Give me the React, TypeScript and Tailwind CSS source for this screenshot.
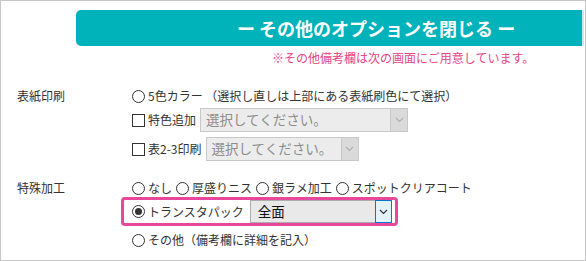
import React from "react";

const Radio = ({ checked = false }: { checked?: boolean }) => (
  <span className="inline-flex w-[13px] h-[13px] shrink-0 rounded-full border border-[#333] bg-white items-center justify-center">
    {checked && <span className="w-[7px] h-[7px] rounded-full bg-[#333]" />}
  </span>
);

const Check = () => (
  <span className="inline-block w-[13px] h-[13px] shrink-0 border border-[#333] bg-white" />
);

const Chevron = ({ color }: { color: string }) => (
  <svg width="9" height="6" viewBox="0 0 9 6" fill="none">
    <path d="M1 1l3.5 3.5L8 1" stroke={color} strokeWidth="1.2" />
  </svg>
);

const DisabledSelect = ({ w }: { w: string }) => (
  <div
    className={`${w} h-[24px] flex items-stretch border border-[#c8c8c8] bg-[#ececec] text-[#8d8d8d] text-[13.5px]`}
  >
    <div className="flex-1 flex items-center pl-[5px] leading-none">選択してください。</div>
    <div className="w-[17px] flex items-center justify-center bg-[#dadada] border-l border-[#c8c8c8]">
      <Chevron color="#b0b0b0" />
    </div>
  </div>
);

export default function App() {
  return (
    <div className="w-[586px] h-[261px] bg-white border border-[#c6c6c6] overflow-hidden font-['Noto_Sans_CJK_JP',sans-serif] text-[12px] text-[#333] leading-none">
      <div className="flex mt-[9px] ml-[75px] h-[36px]">
        <div className="flex-1 rounded-l-[5px] bg-[#00b2b9] text-white font-bold text-[18px] flex items-center pl-[161px] whitespace-nowrap">
          ー その他のオプションを閉じる ー
        </div>
        <div className="w-[2px] bg-[#cde9ef]" />
        <div className="w-[1px]" />
      </div>
      <div className="h-[18px] mt-[3px] pl-[271px] flex items-center text-[#e6457f] text-[12px]">
        ※その他備考欄は次の画面にご用意しています。
      </div>

      <div className="grid grid-cols-[115px_1fr] pl-[16px] mt-[20px]">
        <div className="h-[18px] flex items-center">表紙印刷</div>
        <div className="flex flex-col">
          <div className="h-[18px] flex items-center gap-[3px]">
            <Radio />
            <span>5色カラー （選択し直しは上部にある表紙刷色にて選択）</span>
          </div>
          <div className="h-[24px] mt-[3px] flex items-center">
            <Check />
            <span className="ml-[3px] mr-[4px]">特色追加</span>
            <DisabledSelect w="w-[208px]" />
          </div>
          <div className="h-[24px] mt-[5px] flex items-center">
            <Check />
            <span className="ml-[3px] mr-[4px]">表2-3印刷</span>
            <DisabledSelect w="w-[153px]" />
          </div>
        </div>
      </div>

      <div className="grid grid-cols-[115px_1fr] pl-[16px] mt-[18px]">
        <div className="h-[18px] flex items-center">特殊加工</div>
        <div className="flex flex-col">
          <div className="h-[18px] flex items-center">
            <Radio />
            <span className="ml-[3px] mr-[4px]">なし</span>
            <Radio />
            <span className="ml-[3px] mr-[4px]">厚盛りニス</span>
            <Radio />
            <span className="ml-[3px] mr-[4px]">銀ラメ加工</span>
            <Radio />
            <span className="ml-[3px]">スポットクリアコート</span>
          </div>
          <div className="-ml-[11px] w-[277px] h-[29px] border-[3px] border-[#e8489a] rounded-[4px] flex items-center pl-[8px]">
            <Radio checked />
            <span className="ml-[3px]">トランスタパック</span>
            <div className="ml-[6px] w-[142px] h-[23px] flex items-stretch border border-[#adadad] bg-[#e9e9e9] text-[#111] text-[13.5px]">
              <div className="flex-1 flex items-center pl-[7px]">全面</div>
              <div className="w-[17px] flex items-center justify-center bg-[#e5f1fb] border border-[#0078d7] -my-[1px] -mr-[1px]">
                <Chevron color="#333" />
              </div>
            </div>
          </div>
          <div className="h-[18px] mt-[5px] flex items-center">
            <Radio />
            <span className="ml-[3px]">その他（備考欄に詳細を記入）</span>
          </div>
        </div>
      </div>
    </div>
  );
}
